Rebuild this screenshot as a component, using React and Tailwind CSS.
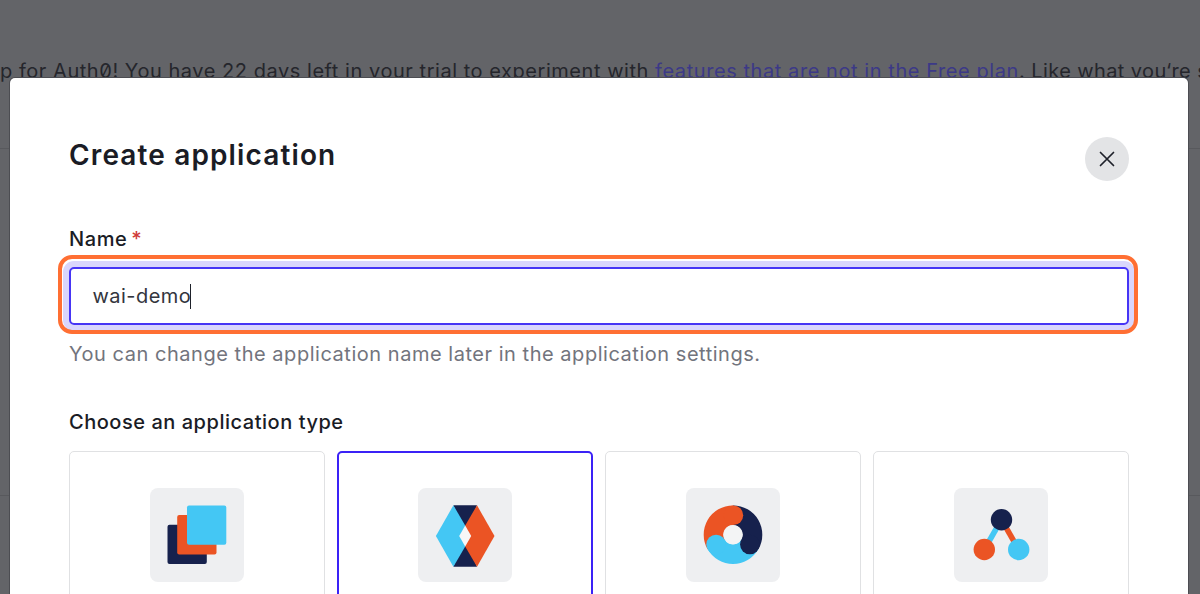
import React from "react";

function StackIcon() {
  return (
    <svg viewBox="0 0 94 94" className="size-full">
      <rect x="17.5" y="36.8" width="39.3" height="39.3" rx="2" fill="#16214d" />
      <rect x="27.2" y="27.1" width="39.3" height="39.3" rx="2" fill="#eb5424" />
      <rect x="37" y="17.4" width="39.3" height="39.3" rx="2" fill="#44c7f4" />
    </svg>
  );
}

function HexIcon() {
  return (
    <svg viewBox="0 0 94 94" className="size-full">
      <path d="M35.4 17.3H59L47.2 48Z" fill="#16214d" />
      <path d="M35.4 78.8H59L47.2 48Z" fill="#16214d" />
      <path d="M35.4 17.3L17.9 48L35.4 78.8L47.2 58.4V37.6Z" fill="#44c7f4" />
      <path d="M59 17.3L76.5 48L59 78.8L47.2 58.4V37.6Z" fill="#eb5424" />
      <path d="M47.2 37.6L53.2 48L47.2 58.4L41.2 48Z" fill="#f6f7f8" />
    </svg>
  );
}

function RingIcon() {
  return (
    <svg viewBox="0 0 94 94" className="size-full">
      <g transform="translate(47 46.7)">
        <g fill="none" strokeWidth="19.6">
          <path d="M0 -19.5A19.5 19.5 0 0 1 16.89 9.75" stroke="#16214d" />
          <path d="M16.89 9.75A19.5 19.5 0 0 1 -16.89 9.75" stroke="#44c7f4" />
          <path d="M-16.89 9.75A19.5 19.5 0 0 1 0 -19.5" stroke="#eb5424" />
        </g>
        <circle cx="0.4" cy="-19.5" r="9.8" fill="#eb5424" />
        <circle cx="16.89" cy="9.75" r="9.8" fill="#16214d" />
        <circle cx="-16.89" cy="9.75" r="9.8" fill="#44c7f4" />
        <circle r="9.5" fill="#f3f4f5" />
      </g>
    </svg>
  );
}

function NodesIcon() {
  return (
    <svg viewBox="0 0 94 94" className="size-full">
      <path d="M47.5 31.7L30.3 61.5" stroke="#44c7f4" strokeWidth="5.6" />
      <path d="M47.5 31.7L64.7 61.5" stroke="#eb5424" strokeWidth="5.6" />
      <circle cx="47.5" cy="31.7" r="10.7" fill="#16214d" />
      <circle cx="30.3" cy="61.5" r="10.7" fill="#eb5424" />
      <circle cx="64.7" cy="61.5" r="10.7" fill="#44c7f4" />
    </svg>
  );
}

const types = [
  { id: "native", Icon: StackIcon },
  { id: "spa", Icon: HexIcon, selected: true },
  { id: "web", Icon: RingIcon },
  { id: "m2m", Icon: NodesIcon },
];

export default function App() {
  return (
    <div className="relative h-[594px] w-[1200px] overflow-hidden bg-[#636468] font-['Inter',sans-serif] text-[#1a1c25]">
      <div className="h-[149px] border-b border-[#58595d] pt-[57px]">
        <p className="text-[20px] leading-7 tracking-[0.54px] whitespace-nowrap text-[#25262c] [font-feature-settings:'zero']">
          p for Auth0! You have 22 days left in your trial to experiment with{" "}
          <a className="tracking-[0.57px] text-[#3c3987]">features that are not in the Free plan</a>.
          <span className="tracking-[0.4px]"> Like what you‘re s</span>
        </p>
      </div>
      <div className="h-[347px] border-b border-[#58595d]" />

      <div className="absolute top-[78px] left-[10px] flex h-[560px] w-[1178px] flex-col rounded-[5px] bg-white px-[59px] pt-[59px] shadow-[0_0_0_1px_#4c4d52]">
        <header className="flex h-11 w-[1060px] items-start justify-between">
          <h1 className="text-[28px] leading-9 font-semibold tracking-[1.13px]">Create application</h1>
          <button className="flex size-11 items-center justify-center rounded-full bg-[#e3e4e6]">
            <svg viewBox="0 0 16 16" className="size-4 stroke-[#1e212a] stroke-[1.7]">
              <path d="M1.5 1.5L14.5 14.5M14.5 1.5L1.5 14.5" strokeLinecap="round" />
            </svg>
          </button>
        </header>

        <label className="mt-11 h-[42px] shrink-0 text-[20px] leading-7 font-medium tracking-[0.6px]">
          Name <span className="-ml-0.5 text-[#d03c38]">*</span>
        </label>
        <div className="relative flex h-[58px] w-[1060px] shrink-0 items-center rounded-[5px] border-2 border-[#4635f5] pl-[21.5px] shadow-[0_0_0_6px_#d9d6fc]">
          <span className="text-[20px] leading-7 tracking-[0.45px] text-[#33353d]">wai-demo</span>
          <span className="-ml-px h-[25px] w-px bg-[#1e212a]" />
          <span className="absolute -top-[14px] -right-[11px] -bottom-[11px] -left-[13px] rounded-[14px] border-4 border-[#ff6f33]" />
        </div>
        <p className="mt-[15px] text-[20px] leading-7 tracking-[0.53px] text-[#72747d]">
          You can change the application name later in the application settings.
        </p>

        <h2 className="mt-[39.5px] text-[20px] leading-7 font-medium tracking-[0.53px]">Choose an application type</h2>
        <div className="mt-[15.5px] grid w-[1060px] grid-cols-4 gap-3">
          {types.map(({ id, Icon, selected }) => (
            <div
              key={id}
              className={
                selected
                  ? "flex h-[220px] justify-center rounded-[5px] border-2 border-[#3b22f6] pt-[35px]"
                  : "flex h-[220px] justify-center rounded-[5px] border border-[#e0e1e3] pt-9"
              }
            >
              <div className="size-[94px] rounded-[8px] bg-[#eeeff1]">
                <Icon />
              </div>
            </div>
          ))}
        </div>
      </div>
    </div>
  );
}
